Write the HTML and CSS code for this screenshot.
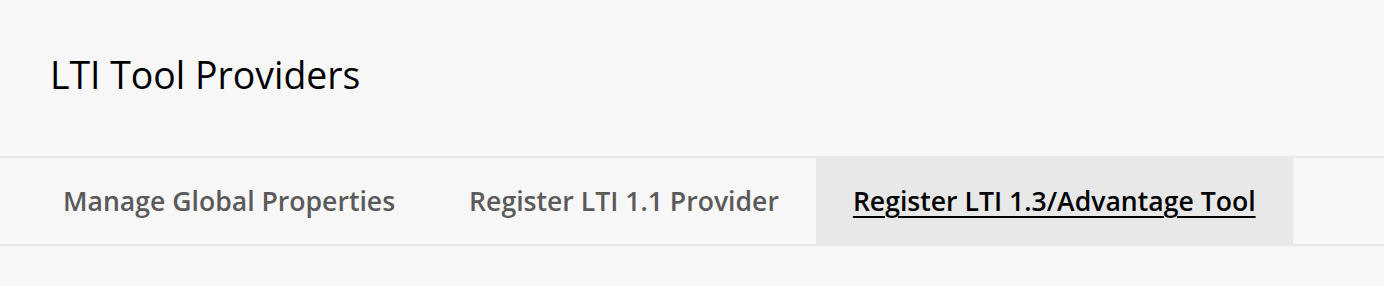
FILE: index.html
```html
<!DOCTYPE html>
<html lang="en">
<head>
  <meta charset="UTF-8">
  <title>LTI Tool Providers</title>
  <link rel="stylesheet" href="styles.css">
</head>
<body>

  <div class="page-header">
    <h1>LTI Tool Providers</h1>
  </div>

  <!-- tabs -->
  <div class="tabs">
    <a class="tab" href="#">Manage Global Properties</a>
    <a class="tab" href="#">Register LTI 1.1 Provider</a>
    <a class="tab active" href="#">Register LTI 1.3/Advantage Tool</a>
  </div>

</body>
</html>
```

FILE: styles.css
```css
body {
  font-family: "Open Sans", "Noto Sans", sans-serif;
  background: #f7f7f7;
  color: #000;
  margin: 0;
}

.page-header {
  display: flex;
  align-items: center;
  height: 148px;
  padding-left: 50px;
  padding-bottom: 8px;
}

.page-header h1 {
  margin: 0;
  font-size: 37.4px;
  font-weight: 400;
}

.tabs {
  display: flex;
  padding-left: 26px;
  border-top: 2px solid #e8e8e8;
  border-bottom: 2px solid #e8e8e8;
}

.tab {
  display: flex;
  align-items: center;
  height: 86px;
  padding: 0 37px;
  font-size: 26.6px;
  font-weight: 600;
  color: #5a5a5a;
  text-decoration: none;
}

.tab.active {
  background: #e8e8e8;
  color: #000;
  text-decoration: underline;
  text-decoration-thickness: 2px;
  text-underline-offset: 5px;
  margin: -2px 0;
  height: 90px;
}
```
